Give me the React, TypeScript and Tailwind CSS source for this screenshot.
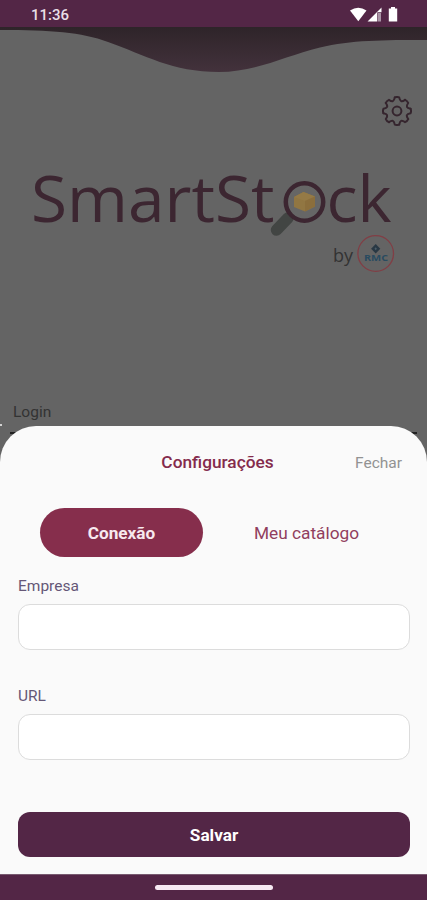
const TEETH = [0, 45, 90, 135, 180, 225, 270, 315];

function StatusBar() {
  return (
    <header className="flex h-[27px] items-center justify-between bg-[#532646] pl-[31px] pr-[28px] pt-[2px] text-[#e9dfe7]">
      <span className="pt-[2px] text-[15px] font-medium leading-none">11:36</span>
      <svg width="49" height="16" viewBox="0 0 49 16" fill="#fff">
        <path d="M0 3.5Q8.3-2.2 16.5 3.5L8.3 14.2Z" />
        <path d="M17.5 14.5L31.5.5v4.8h-4.2v9.2Z" />
        <path d="M28 6h3v8.5h-3Z" fill="#a994a5" />
        <path d="M41 0h4v1.4h2.2v13.1H38.8V1.4H41Z" />
      </svg>
    </header>
  );
}

function Wave() {
  return (
    <svg className="block shrink-0" width="427" height="47" viewBox="0 0 427 47">
      <defs>
        <linearGradient id="wave" x1="0" y1="0" x2="0" y2="1">
          <stop offset="0" stopColor="#2e2429" />
          <stop offset="1" stopColor="#43323c" />
        </linearGradient>
      </defs>
      <path
        d="M0 0H427V13C383 13 351 13 320 20.5C285 29 256 45 219 45C172 45 145 28 108 15C81 5 51 3 0 3Z"
        fill="url(#wave)"
      />
    </svg>
  );
}

function Gear() {
  return (
    <svg
      width="30"
      height="30"
      viewBox="-15 -15 30 30"
      fill="none"
      stroke="#35252e"
      strokeWidth="2"
      strokeLinejoin="round"
      strokeLinecap="round"
    >
      {TEETH.map((angle) => (
        <path
          key={angle}
          d="M-2.2 -13.6Q0 -14.5 2.2 -13.6C3 -9.4 4.53 -8.78 8.06 -11.17"
          transform={`rotate(${angle})`}
        />
      ))}
      <circle r="4.4" />
    </svg>
  );
}

function Logo() {
  return (
    <svg className="block shrink-0" width="427" height="136" viewBox="0 140 427 136">
      <g fill="#3c2631" fontFamily="Open Sans, Noto Sans, sans-serif" fontSize="63.5">
        <text x="31" y="222" textLength="243.5" lengthAdjust="spacingAndGlyphs">
          SmartSt
        </text>
        <text x="326.5" y="222" textLength="65" lengthAdjust="spacingAndGlyphs">
          ck
        </text>
      </g>
      <path d="M288 218L276.5 230" stroke="#424543" strokeWidth="11.5" strokeLinecap="round" />
      <circle cx="304.5" cy="202" r="18.7" fill="#666" stroke="#3c2631" strokeWidth="4.5" />
      <path d="M303.5 192L315 196.5V206.5L305 211.5L294 207V197Z" fill="#917642" />
      <path d="M294 197L303.5 192L315 196.5L305 201Z" fill="#957a46" />
      <path d="M305 201L315 196.5V206.5L305 211.5Z" fill="#8b6e3c" />
      <text
        x="333"
        y="261.5"
        fill="#333"
        fontFamily="Open Sans, Noto Sans, sans-serif"
        fontSize="18"
      >
        by
      </text>
      <circle cx="375.7" cy="253.5" r="17.8" fill="none" stroke="#813e45" strokeWidth="1.3" />
      <path d="M375.7 244L380.3 248.7L375.7 253.4L371.1 248.7Z" fill="#293844" />
      <path d="M374.5 248.7L375.7 247.2L376.9 248.7L375.7 250.2Z" fill="#4d5e6a" />
      <text
        x="364"
        y="260.8"
        fill="#294b60"
        fontFamily="Open Sans, sans-serif"
        fontSize="8"
        fontWeight="700"
        textLength="24"
        lengthAdjust="spacingAndGlyphs"
      >
        RMC
      </text>
    </svg>
  );
}

function Field({ label }: { label: string }) {
  return (
    <label className="block h-[110px] text-[15.5px] leading-[18px] text-[#655777]">
      <span className="block">{label}</span>
      <input className="mt-[9px] block h-[46px] w-full rounded-[12px] border border-[#dcdcdc] bg-white px-3 outline-none" />
    </label>
  );
}

function SettingsSheet() {
  return (
    <section className="relative -mt-[8px] h-[448px] shrink-0 rounded-t-[36px] bg-[#fafafa] pl-[18px] pr-[17px]">
      <div className="grid h-[82px] grid-cols-[1fr_auto_1fr] items-center pr-[8px] pb-[8px]">
        <h1 className="col-start-2 ml-[15px] text-[17.3px] font-medium text-[#842b4c]">
          Configurações
        </h1>
        <button className="justify-self-end pt-[2px] text-[15.5px] text-[#929292]">Fechar</button>
      </div>
      <div className="flex h-[69px] pl-[22px]">
        <button className="h-[49px] w-[163px] rounded-full bg-[#862e4c] pt-[2px] text-[17.2px] font-bold text-[#f7e9ef]">
          Conexão
        </button>
        <button className="ml-[22px] h-[49px] w-[163px] pt-[2px] text-[17.3px] text-[#913e5e]">
          Meu catálogo
        </button>
      </div>
      <Field label="Empresa" />
      <Field label="URL" />
      <button className="mt-[15px] block h-[45px] w-full rounded-[12px] bg-[#532646] pt-[2px] text-[17.2px] font-bold text-white">
        Salvar
      </button>
    </section>
  );
}

export default function App() {
  return (
    <main className="flex h-[900px] w-[427px] flex-col overflow-hidden bg-[#646464] font-[Roboto,sans-serif]">
      <StatusBar />
      <Wave />
      <div className="flex h-[66px] shrink-0 justify-end pr-[15px] pt-[22px]">
        <Gear />
      </div>
      <Logo />
      <div className="flex h-[158px] shrink-0 flex-col justify-end">
        <span className="pb-[3px] pl-[13px] text-[15.5px] leading-[18px] text-[#333]">Login</span>
        <div className="h-[2px] w-[2px] bg-[#d2d2d2]" />
        <div className="mx-[10px] mt-[6px] h-[2px] bg-[#222]" />
      </div>
      <SettingsSheet />
      <footer className="flex h-[26px] shrink-0 items-center justify-center border-t border-[#785a70] bg-[#532646]">
        <div className="h-[5px] w-[118px] rounded-full bg-[#f6e9f2]" />
      </footer>
    </main>
  );
}
